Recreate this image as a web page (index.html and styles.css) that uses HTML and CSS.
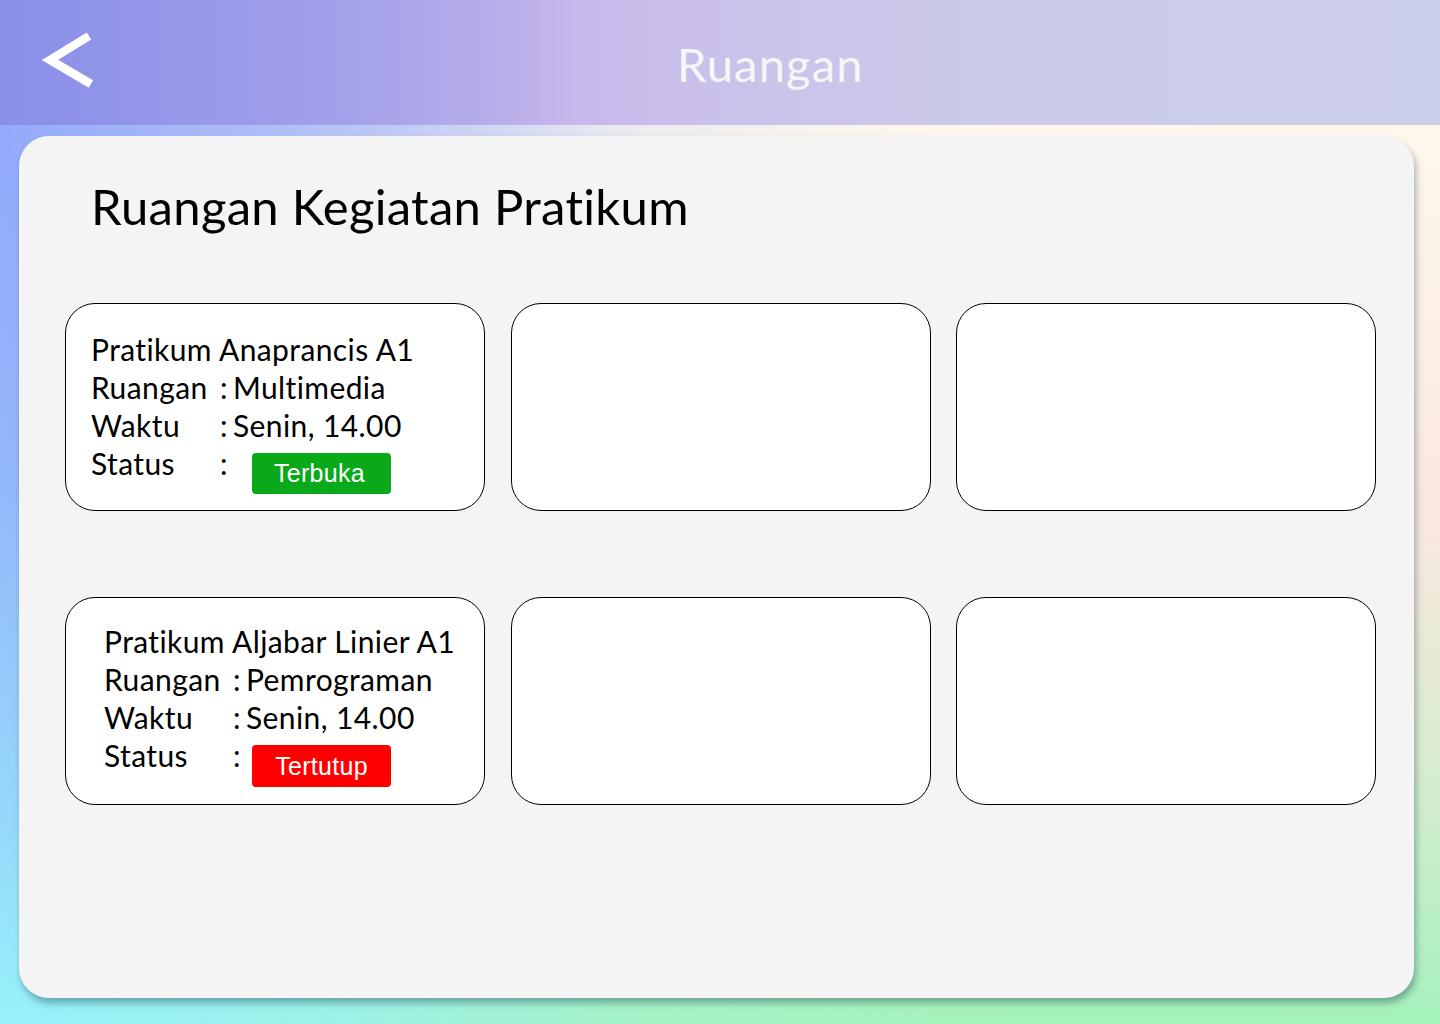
FILE: index.html
```html
<!DOCTYPE html>
<html lang="id">
<head>
<meta charset="utf-8">
<title>Ruangan</title>
<link rel="stylesheet" href="styles.css">
</head>
<body>
<div class="bg-tint"></div>
<header class="topbar">
  <button class="back" aria-label="Kembali">
    <svg width="54" height="56" viewBox="0 0 54 56">
      <polyline points="47,4 8,28 49,52" fill="none" stroke="#ffffff" stroke-width="8.5" stroke-linejoin="miter"/>
    </svg>
  </button>
  <h1 class="topbar-title">Ruangan</h1>
</header>
<main class="panel">
  <h2 class="panel-title">Ruangan Kegiatan Pratikum</h2>
  <div class="grid">
    <article class="card">
      <div class="card-name">Pratikum Anaprancis A1</div>
      <div class="row"><span class="label">Ruangan</span><span class="colon">:</span><span class="value">Multimedia</span></div>
      <div class="row"><span class="label">Waktu</span><span class="colon">:</span><span class="value">Senin, 14.00</span></div>
      <div class="row row-status"><span class="label">Status</span><span class="colon">:</span><span class="badge badge-open">Terbuka</span></div>
    </article>
    <article class="card card-empty"></article>
    <article class="card card-empty"></article>
    <article class="card card-shift">
      <div class="card-name">Pratikum Aljabar Linier A1</div>
      <div class="row"><span class="label">Ruangan</span><span class="colon">:</span><span class="value">Pemrograman</span></div>
      <div class="row"><span class="label">Waktu</span><span class="colon">:</span><span class="value">Senin, 14.00</span></div>
      <div class="row row-status"><span class="label">Status</span><span class="colon">:</span><span class="badge badge-closed">Tertutup</span></div>
    </article>
    <article class="card card-empty"></article>
    <article class="card card-empty"></article>
  </div>
</main>
</body>
</html>
```
FILE: styles.css
```css
* { box-sizing: border-box; }

html, body {
  margin: 0;
  padding: 0;
}

body {
  width: 1440px;
  height: 1024px;
  overflow: hidden;
  position: relative;
  font-family: Lato, "Noto Sans", sans-serif;
  color: #000;
  background: linear-gradient(to bottom, #94a6fb 0%, #93b6fb 45%, #96d8fb 80%, #98f2fb 100%);
}

.bg-tint {
  position: absolute;
  inset: 0;
  z-index: 0;
  background: linear-gradient(to bottom, #fffdf0 0%, #fdf3e8 25%, #fbe8e0 50%, #d8ecd0 75%, #a5f2bb 100%);
  -webkit-mask-image: linear-gradient(to right, rgba(0,0,0,0) 0%, rgba(0,0,0,0.35) 25%, rgba(0,0,0,0.85) 45%, #000 65%);
  mask-image: linear-gradient(to right, rgba(0,0,0,0) 0%, rgba(0,0,0,0.35) 25%, rgba(0,0,0,0.85) 45%, #000 65%);
}

.topbar {
  position: relative;
  z-index: 1;
  height: 125px;
  display: flex;
  align-items: center;
  background: linear-gradient(90deg, #898fe8 0%, #a09fea 22%, #b6adea 34%, #c8b8ec 40%, #cbc3ea 52%, #cbcbea 70%, #cccfe9 100%);
}

.back {
  margin: -6px 0 0 42px;
  padding: 0;
  border: 0;
  background: none;
  display: flex;
  width: 56px;
  height: 56px;
  align-items: center;
}

.topbar-title {
  margin: 2px 0 0 579px;
  font-family: Lato, "Noto Sans", sans-serif;
  font-weight: 400;
  font-size: 47px;
  color: #f6f6f8;
  letter-spacing: 1.2px;
}

.panel {
  position: relative;
  z-index: 1;
  margin: 11px 0 0 19px;
  width: 1395px;
  height: 862px;
  background: #f4f4f4;
  border-radius: 30px;
  box-shadow: 2px 5px 7px rgba(0, 40, 60, 0.35);
  padding: 40px 0 0 46px;
}

.panel-title {
  margin: 0 0 0 26px;
  font-weight: 400;
  font-size: 49px;
  line-height: 60px;
  letter-spacing: 0.3px;
  color: #000;
}

.grid {
  margin-top: 67px;
  display: grid;
  grid-template-columns: repeat(3, 420px);
  grid-auto-rows: 208px;
  column-gap: 25.5px;
  row-gap: 86px;
}

.card {
  background: #fff;
  border: 1px solid #000;
  border-radius: 30px;
  padding: 26px 0 0 25px;
  font-size: 30px;
  line-height: 38px;
  letter-spacing: 0.4px;
}

.card-shift {
  padding: 24px 0 0 38px;
}

.card-name {
  white-space: nowrap;
}

.row {
  display: grid;
  grid-template-columns: 129px 13px auto;
  column-gap: 0;
  white-space: nowrap;
  align-items: start;
}

.badge {
  display: flex;
  align-items: center;
  justify-content: center;
  width: 139px;
  height: 41px;
  margin-top: 9px;
  border-radius: 4px;
  font-family: "Liberation Sans", Arial, sans-serif;
  font-size: 25px;
  letter-spacing: 0.3px;
  line-height: 1;
  color: #fff;
  justify-self: start;
}

.badge-open {
  background: #0aa91a;
  margin-left: 19px;
  padding-right: 4px;
}

.badge-closed {
  background: #ff0000;
  margin-left: 6px;
  height: 42px;
}
```
